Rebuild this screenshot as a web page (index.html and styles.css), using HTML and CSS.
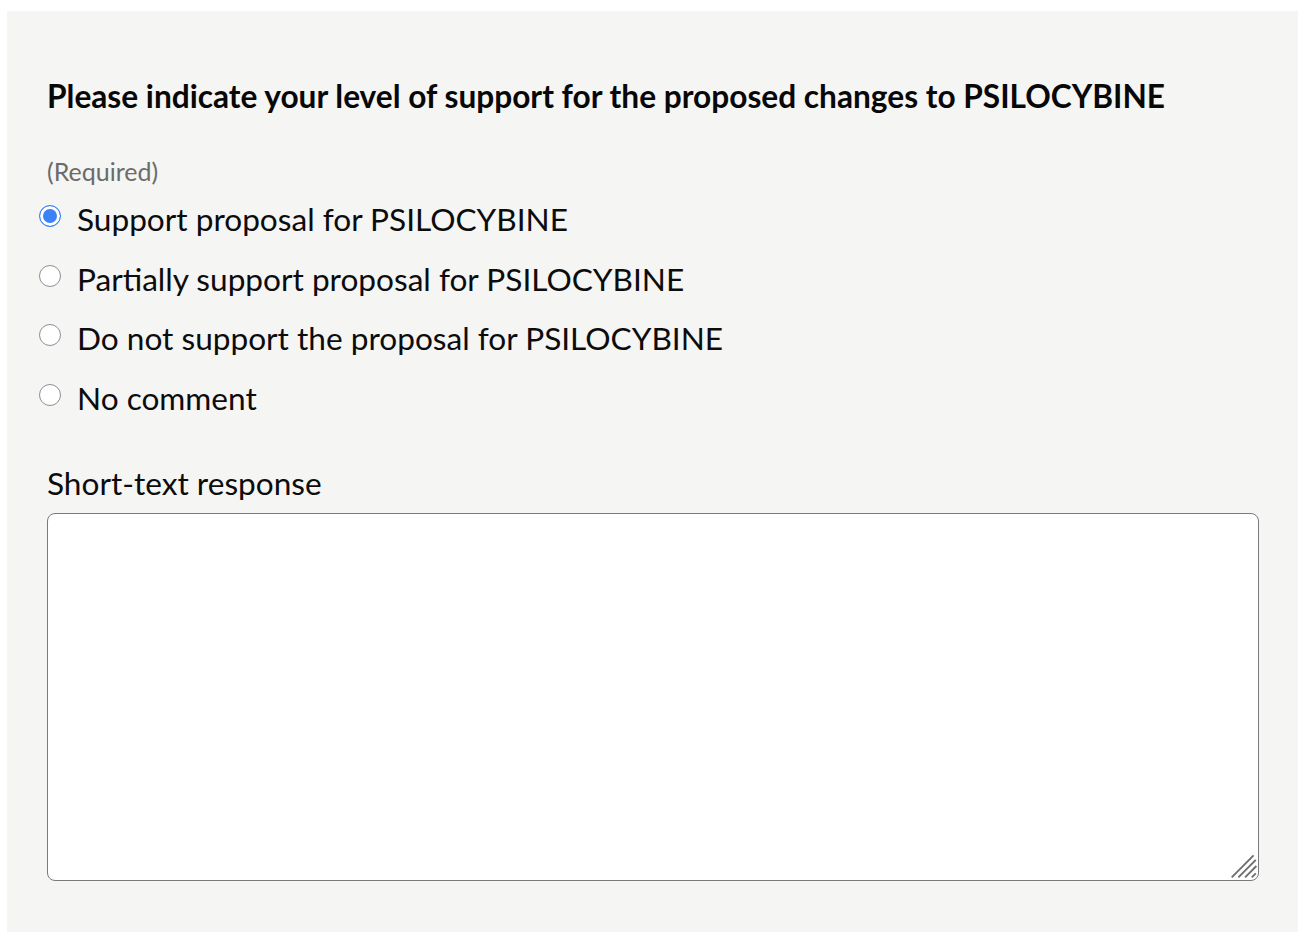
FILE: index.html
```html
<!DOCTYPE html>
<html lang="en">
<head>
<meta charset="utf-8">
<title>Support level</title>
<link rel="stylesheet" href="styles.css">
</head>
<body>
<form class="panel">
  <fieldset class="question">
    <legend class="question-title">Please indicate your level of support for the proposed changes to PSILOCYBINE</legend>
    <div class="required">(Required)</div>
    <label class="option"><input type="radio" name="support" checked><span>Support proposal for PSILOCYBINE</span></label>
    <label class="option"><input type="radio" name="support"><span>Partially support proposal for PSILOCYBINE</span></label>
    <label class="option"><input type="radio" name="support"><span>Do not support the proposal for PSILOCYBINE</span></label>
    <label class="option"><input type="radio" name="support"><span>No comment</span></label>
  </fieldset>
  <label class="field">
    <span class="field-label">Short-text response</span>
    <span class="field-box">
      <textarea class="field-input"></textarea>
      <svg class="grip" viewBox="0 0 30 31" width="30" height="31" aria-hidden="true">
        <g stroke="#6e6e6e" stroke-width="1.9" stroke-linecap="butt">
          <line x1="2.7" y1="27.3" x2="24.6" y2="5.4"/>
          <line x1="9.4" y1="27.3" x2="26.8" y2="9.9"/>
          <line x1="16.1" y1="27.3" x2="27.4" y2="16"/>
          <line x1="22.8" y1="27.3" x2="26.8" y2="23.3"/>
        </g>
      </svg>
    </span>
  </label>
</form>
</body>
</html>
```

FILE: styles.css
```css
html, body {
  margin: 0;
  padding: 0;
  background: #ffffff;
}

body {
  padding: 11px 16px 18px 7px;
  font-family: Lato, "Open Sans", "Liberation Sans", sans-serif;
  color: #111111;
}

.panel {
  background: #f5f5f4;
  padding: 66px 39px 51px 40px;
  display: flex;
  flex-direction: column;
  height: 921px;
  box-sizing: border-box;
}

.question {
  border: 0;
  margin: 0;
  padding: 0;
  display: flex;
  flex-direction: column;
}

.question-title {
  padding: 0;
  font-weight: 700;
  font-size: 31.65px;
  line-height: 38px;
  color: #080808;
  float: left;
  width: 100%;
  white-space: nowrap;
}

.required {
  margin-top: 41px;
  font-size: 25px;
  line-height: 30px;
  color: #6b6b6b;
}

.option {
  display: flex;
  align-items: flex-start;
  gap: 16px;
  margin-left: -8px;
  font-size: 31.6px;
  line-height: 38px;
  margin-top: 21.5px;
  color: #0c0c0c;
}

.option:first-of-type {
  margin-top: 14px;
}

.option input {
  appearance: none;
  -webkit-appearance: none;
  margin: 5px 0 0 0;
  width: 22px;
  height: 22px;
  border-radius: 50%;
  border: 1.5px solid #8e8e95;
  background: #ffffff;
  box-sizing: border-box;
  flex: none;
}

.option input:checked {
  border: 1.5px solid #3b82f6;
  background: #3b82f6;
  box-shadow: inset 0 0 0 3px #ffffff;
}

.field {
  display: flex;
  flex-direction: column;
  margin-top: 47px;
  flex: 1;
}

.field-label {
  font-size: 31.6px;
  line-height: 38px;
  margin-bottom: 11px;
  color: #0c0c0c;
}

.field-box {
  flex: 1;
  display: flex;
  position: relative;
}

.field-input {
  flex: 1;
  border: 1px solid #7a7a7a;
  border-radius: 8px;
  background: #ffffff;
  margin: 0;
  resize: none;
}

.grip {
  position: absolute;
  right: 0;
  bottom: 0;
  pointer-events: none;
}
```
